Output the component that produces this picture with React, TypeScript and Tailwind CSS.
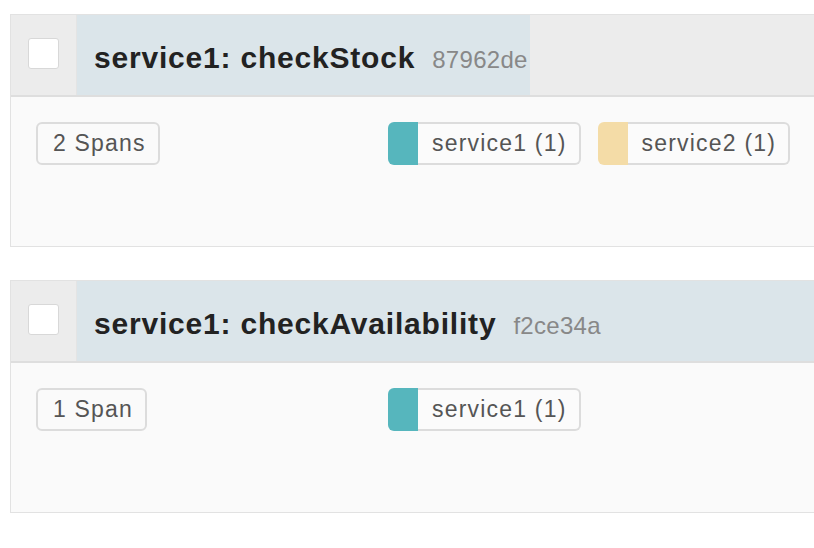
const TRACES = [
  {
    name: 'service1: checkStock',
    id: '87962de',
    spans: '2 Spans',
    hovered: false,
    services: [
      { label: 'service1 (1)', color: '#56b6bd' },
      { label: 'service2 (1)', color: '#f4dca7' },
    ],
  },
  {
    name: 'service1: checkAvailability',
    id: 'f2ce34a',
    spans: '1 Span',
    hovered: true,
    services: [{ label: 'service1 (1)', color: '#56b6bd' }],
  },
];

type Trace = (typeof TRACES)[number];

function ServicePill({ label, color }: { label: string; color: string }) {
  return (
    <div className="flex h-[43px]">
      <div className="w-[30px] h-full rounded-l-[6px]" style={{ background: color }} />
      <div className="flex items-center h-full pl-[14px] pr-[12px] border-y-2 border-r-2 border-[#dcdcdc] rounded-r-[6px] bg-[#fbfbfb] text-[23px] tracking-[1.2px] text-[#555]">
        {label}
      </div>
    </div>
  );
}

function TraceCard({ trace }: { trace: Trace }) {
  return (
    <div className="w-[820px] border border-r-0 border-[#e2e2e2] bg-[#fafafa]">
      <div className="flex h-[82px] border-b-2 border-[#dedede] bg-[#ececec]">
        <div className="w-[66px] shrink-0 flex items-center pl-[17px] pb-[4px] border-r border-[#e4e4e4]">
          <div className="w-[31px] h-[31px] bg-white border border-[#d8d8d8] rounded-[3px]" />
        </div>
        <div
          className={
            trace.hovered
              ? 'flex-1 flex items-center pl-[17px] pt-[4px] bg-[#dbe5ea] whitespace-nowrap'
              : 'flex items-center pl-[17px] pr-[2px] pt-[4px] bg-[#dbe5ea] whitespace-nowrap'
          }
        >
          <div className="flex items-baseline">
            <span className="text-[30px] font-bold tracking-[0.8px] text-[#222]">{trace.name}</span>
            <span className="ml-[17px] text-[24px] tracking-[0.3px] text-[#888]">{trace.id}</span>
          </div>
        </div>
      </div>
      <div className="flex items-start h-[149px] pt-[25px] pl-[25px]">
        <div className="w-[352px] shrink-0">
          <div className="inline-flex items-center h-[43px] pl-[15px] pr-[12px] border-2 border-[#dcdcdc] rounded-[6px] text-[23px] tracking-[1.2px] text-[#555]">
            {trace.spans}
          </div>
        </div>
        <div className="flex gap-[17px]">
          {trace.services.map((s) => (
            <ServicePill key={s.label + s.color} label={s.label} color={s.color} />
          ))}
        </div>
      </div>
    </div>
  );
}

export default function App() {
  return (
    <div
      className="w-[814px] h-[548px] overflow-hidden bg-white pt-[14px] pl-[10px] flex flex-col gap-[33px]"
      style={{ fontFamily: '"Liberation Sans", Arial, sans-serif' }}
    >
      {TRACES.map((t) => (
        <TraceCard key={t.id} trace={t} />
      ))}
    </div>
  );
}
